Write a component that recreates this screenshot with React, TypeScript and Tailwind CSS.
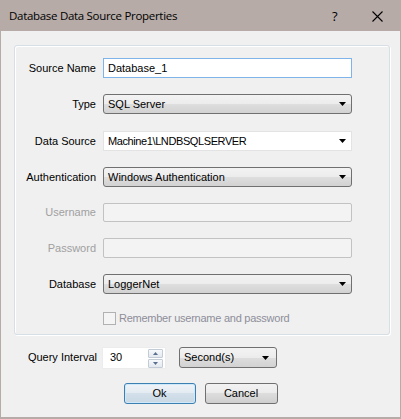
import React from "react";

const font = { fontFamily: '"Liberation Sans", Arial, sans-serif' };

function Arrow() {
  return (
    <svg width="7" height="4" viewBox="0 0 7 4" className="shrink-0">
      <path d="M0 0 H7 L3.5 4 Z" fill="#000" />
    </svg>
  );
}

function Select({ value, className = "" }: { value: string; className?: string }) {
  return (
    <div
      className={
        "h-[20px] flex items-center justify-between border border-[#707070] rounded-[3px] bg-[linear-gradient(to_bottom,#f3f3f3_0%,#ececec_50%,#dedede_50%,#d2d2d2_100%)] pl-[4px] pr-[5px] text-[11px] text-black " +
        className
      }
    >
      <span className="leading-none">{value}</span>
      <Arrow />
    </div>
  );
}

function Row({
  label,
  disabled,
  children,
  className = "",
}: {
  label: string;
  disabled?: boolean;
  children: React.ReactNode;
  className?: string;
}) {
  return (
    <div className={"flex items-center h-[20px] " + className}>
      <div
        className={
          "w-[82px] text-right text-[11px] leading-none pr-[1px] " +
          (disabled ? "text-[#a0a0a0]" : "text-black")
        }
      >
        {label}
      </div>
      <div className="ml-[6px] w-[249px]">{children}</div>
    </div>
  );
}

export default function App() {
  return (
    <div
      className="w-[401px] h-[419px] bg-[#b6aba7] flex flex-col overflow-hidden"
      style={font}
    >
      {/* Title bar */}
      <div className="h-[31px] shrink-0 flex items-center relative">
        <span
          className="ml-[9px] text-[12px] text-black tracking-[-0.3px]"
          style={{ fontFamily: '"Open Sans", "Liberation Sans", sans-serif', fontSize: "11.5px" }}
        >
          Database Data Source Properties
        </span>
        <span
          className="absolute left-[332px] top-[7px] text-[13px] text-black"
          style={{ fontFamily: '"Open Sans", sans-serif' }}
        >
          ?
        </span>
        <svg
          className="absolute left-[372px] top-[11px]"
          width="11"
          height="11"
          viewBox="0 0 11 11"
        >
          <path d="M0.5 0.5 L10.5 10.5 M10.5 0.5 L0.5 10.5" stroke="#000" strokeWidth="1.1" />
        </svg>
      </div>

      {/* Body */}
      <div className="flex-1 mx-[1px] mb-[2px] bg-[#f0f0f0] flex flex-col">
        {/* Group box */}
        <div className="mt-[14px] ml-[13px] w-[376px] h-[290px] border border-[#d5dfe5] rounded-[3px] shadow-[inset_1px_1px_0_#ffffff,1px_1px_0_#ffffff] pt-[12px] flex flex-col">
          <Row label="Source Name">
            <div className="h-[20px] border border-[#7eb4ea] bg-white flex items-center pl-[4px] text-[11px] text-black">
              Database_1
            </div>
          </Row>
          <Row label="Type" className="mt-[16px]">
            <Select value="SQL Server" />
          </Row>
          <Row label="Data Source" className="mt-[17px]">
            <div className="h-[20px] border border-[#e3e3e3] bg-white flex items-center justify-between pl-[4px] pr-[5px] text-[11px] text-black">
              <span className="tracking-[-0.4px]">Machine1\LNDBSQLSERVER</span>
              <Arrow />
            </div>
          </Row>
          <Row label="Authentication" className="mt-[16px]">
            <Select value="Windows Authentication" />
          </Row>
          <Row label="Username" disabled className="mt-[15px]">
            <div className="h-[19px] border border-[#c2c2c2] rounded-[2px] bg-[#f3f3f3]" />
          </Row>
          <Row label="Password" disabled className="mt-[16px]">
            <div className="h-[20px] border border-[#c2c2c2] rounded-[2px] bg-[#f3f3f3]" />
          </Row>
          <Row label="Database" className="mt-[16px]">
            <Select value="LoggerNet" />
          </Row>
          <div className="mt-[18px] pl-[88px] flex items-center h-[13px]">
            <div className="w-[13px] h-[13px] border border-[#b1b1b1] bg-[#f4f4f4]" />
            <span className="ml-[3px] text-[11px] leading-none text-[#8e8e9a] tracking-[-0.25px]">
              Remember username and password
            </span>
          </div>
        </div>

        {/* Query interval */}
        <div className="mt-[12px] h-[21px] flex items-center">
          <div className="w-[96px] text-right text-[11px] text-black leading-none">
            Query Interval
          </div>
          <div className="ml-[5px] w-[64px] h-[22px] bg-white border border-[#ececec] flex items-start">
            <span className="ml-[7px] mt-[2px] text-[11px] text-black leading-[14px]">30</span>
            <div className="ml-auto mr-[2px] mt-[1px] flex flex-col gap-[1px]">
              <div className="w-[15px] h-[9px] border border-[#c3cbd6] rounded-[1px] bg-[linear-gradient(to_bottom,#f7f9fb,#e3e9ef)] flex items-center justify-center">
                <svg width="5" height="3" viewBox="0 0 5 3">
                  <path d="M0 3 H5 L2.5 0 Z" fill="#5a6e92" />
                </svg>
              </div>
              <div className="w-[15px] h-[9px] border border-[#c3cbd6] rounded-[1px] bg-[linear-gradient(to_bottom,#f7f9fb,#e3e9ef)] flex items-center justify-center">
                <svg width="5" height="3" viewBox="0 0 5 3">
                  <path d="M0 0 H5 L2.5 3 Z" fill="#5a6e92" />
                </svg>
              </div>
            </div>
          </div>
          <Select value="Second(s)" className="ml-[13px] w-[98px] !h-[21px] !pr-[7px]" />
        </div>

        {/* Buttons */}
        <div className="mt-[15px] flex justify-center gap-[9px]">
          <div className="w-[72px] h-[21px] border border-[#3c7fb1] rounded-[3px] bg-[linear-gradient(to_bottom,#eef3f7_0%,#e3ebf2_50%,#d3e0ea_50%,#c9d8e4_100%)] shadow-[inset_0_0_0_1px_#cfe9fb] flex items-center justify-center text-[11px] text-black">
            Ok
          </div>
          <div className="w-[73px] h-[21px] border border-[#707070] rounded-[3px] bg-[linear-gradient(to_bottom,#f2f2f2_0%,#ebebeb_50%,#dddddd_50%,#cfcfcf_100%)] flex items-center justify-center text-[11px] text-black">
            Cancel
          </div>
        </div>
      </div>
    </div>
  );
}
